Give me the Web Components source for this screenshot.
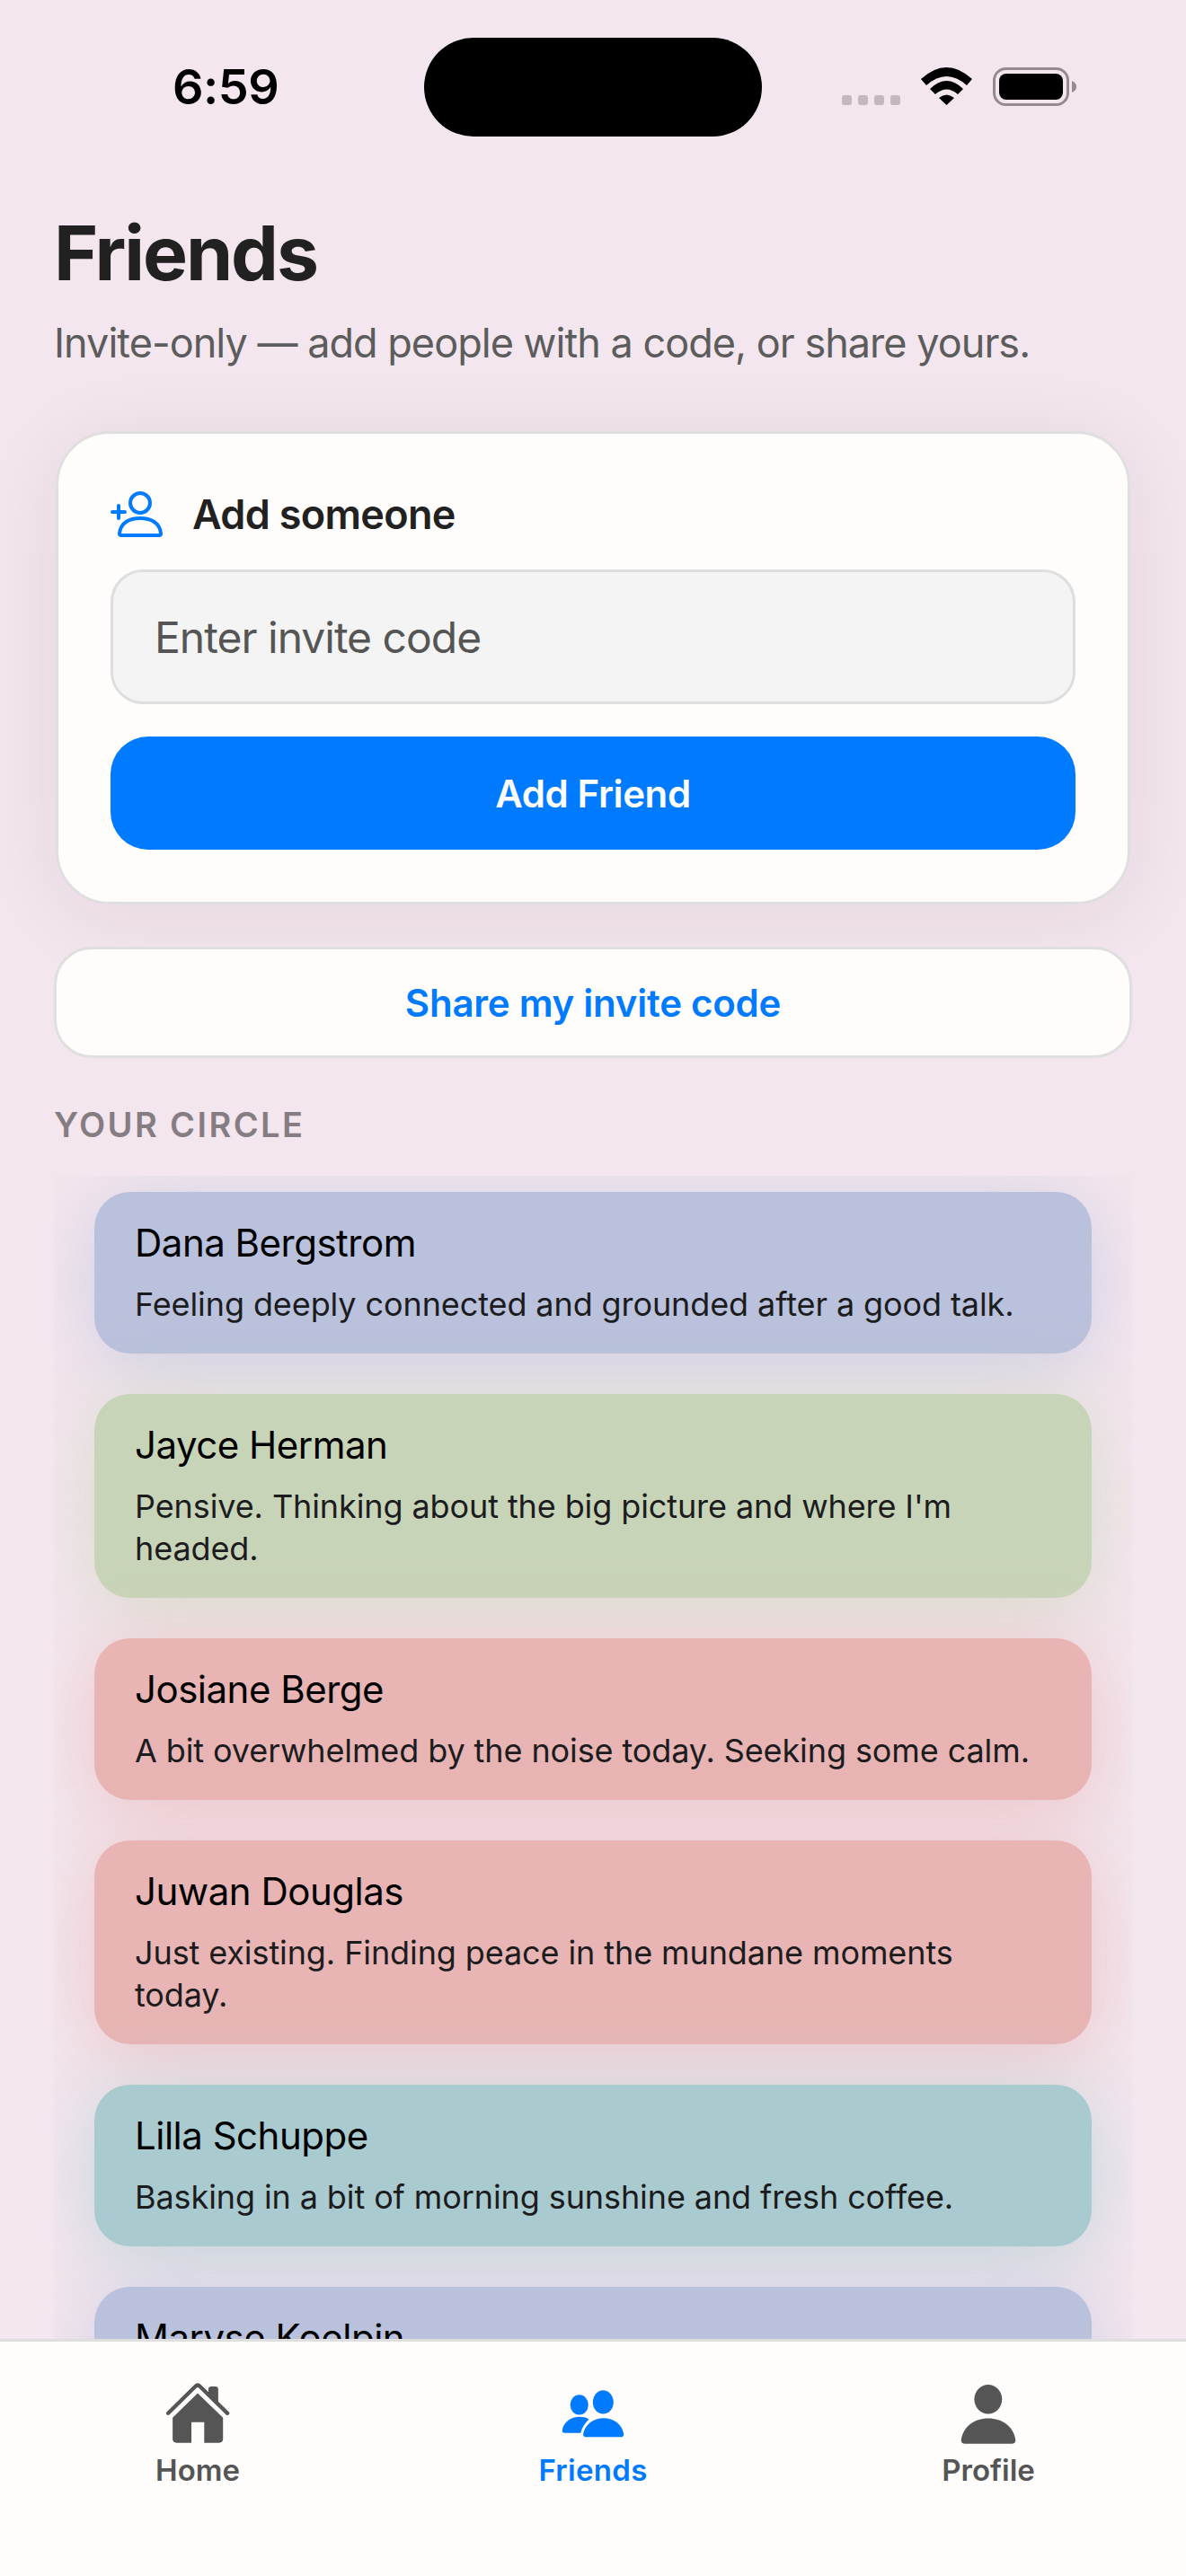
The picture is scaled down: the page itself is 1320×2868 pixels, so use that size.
<!DOCTYPE html>
<html>
<head>
<meta charset="utf-8">
<title>Friends</title>
<style>
  html, body { margin: 0; padding: 0; }
  body { width: 1320px; height: 2868px; overflow: hidden; background: #f3e6ee; font-family: Inter, "Noto Sans", sans-serif; }
</style>
</head>
<body>
<friends-app></friends-app>

<script>
class StatusBar extends HTMLElement {
  constructor() {
    super();
    this.attachShadow({ mode: 'open' });
    this.shadowRoot.innerHTML = `
      <style>
        :host { display: flex; height: 110px; padding-top: 42px; align-items: flex-start; color: #000; }
        .time { width: 472px; padding-left: 192px; box-sizing: border-box; font-size: 54px; font-weight: 600; line-height: 110px; height: 110px; letter-spacing: -.5px; }
        .island { width: 376px; height: 110px; border-radius: 55px; background: #000; }
        .right { position: relative; flex: 1; }
        svg { position: absolute; left: 0; top: -42px; }
      </style>
      <div class="time">6:59</div>
      <div class="island"></div>
      <div class="right">
        <svg width="472" height="152" viewBox="848 0 472 152">
          <g fill="#c4b8c0">
            <rect x="937" y="106" width="11" height="11" rx="3"/>
            <rect x="955" y="106" width="11" height="11" rx="3"/>
            <rect x="973" y="106" width="11" height="11" rx="3"/>
            <rect x="991" y="106" width="11" height="11" rx="3"/>
          </g>
          <path d="M1025 88 Q1053.500 62 1082 88 L1076 95 Q1053.500 75 1031 95Z M1035 99 Q1053.500 81 1072 99 L1066 105 Q1053.500 94 1041 105Z M1045 109 Q1053.500 102 1062 109 L1053.500 117Z" fill="#000"/>
          <rect x="1106.500" y="76.500" width="82" height="40" rx="13" fill="none" stroke="#958a90" stroke-width="3"/>
          <rect x="1112" y="82" width="71" height="29" rx="8" fill="#000"/>
          <path d="M1193 90 Q1198 92 1198 96.500 Q1198 101 1193 103Z" fill="#958a90"/>
        </svg>
      </div>`;
  }
}

class AddCard extends HTMLElement {
  constructor() {
    super();
    this.attachShadow({ mode: 'open' });
    this.shadowRoot.innerHTML = `
      <style>
        :host { display: block; box-sizing: border-box; background: #fffdfb; border: 3px solid #e0dfe0; border-radius: 60px; padding: 60px 58px; height: 527px; box-shadow: 0 12px 90px rgba(60, 30, 50, .08); margin: 0 2px; }
        .head { display: flex; align-items: center; gap: 31px; height: 56px; margin-top: 1px; color: #212121; font-size: 45px; font-weight: 600; letter-spacing: -.7px; }
        .input { box-sizing: border-box; height: 150px; margin-top: 34px; border: 3px solid #dedede; border-radius: 36px; background: #f4f4f5; padding-left: 46px; display: flex; align-items: center; font-size: 48px; letter-spacing: -1px; color: #555; }
        .btn { height: 126px; margin-top: 36px; border-radius: 42px; background: #007aff; color: #fff; display: flex; align-items: center; justify-content: center; font-size: 42px; font-weight: 600; letter-spacing: -.4px; }
      </style>
      <div class="head">
        <svg width="60" height="56" viewBox="0 0 60 56" fill="none" stroke="#007aff" stroke-width="4" stroke-linecap="round" stroke-linejoin="round">
          <circle cx="33" cy="16" r="11"/>
          <path d="M10 50 C11 38 21 33 33 33 C45 33 55 38 56 50 Q56 52 54 52 L12 52 Q10 52 10 50Z"/>
          <path d="M2 26 H16 M9 19 V33"/>
        </svg>
        <span>Add someone</span>
      </div>
      <div class="input">Enter invite code</div>
      <div class="btn">Add Friend</div>`;
  }
}

class FriendCard extends HTMLElement {
  constructor() {
    super();
    this.attachShadow({ mode: 'open' });
    this.shadowRoot.innerHTML = `
      <style>
        :host { display: block; flex: none; box-sizing: border-box; min-height: 180px; border-radius: 40px; padding: 32px 45px 31px; background: var(--tint); box-shadow: 0 12px 84px color-mix(in srgb, var(--tint) 65%, transparent); }
        .name { font-size: 42px; line-height: 50px; letter-spacing: -.5px; color: #000; }
        .mood { font-size: 36px; line-height: 47px; margin-top: 20px; letter-spacing: -.1px; color: #1c1c1e; }
      </style>
      <div class="name"><slot name="name"></slot></div>
      <div class="mood"><slot></slot></div>`;
  }
}

class TabItem extends HTMLElement {
  constructor() {
    super();
    this.attachShadow({ mode: 'open' });
    this.shadowRoot.innerHTML = `
      <style>
        :host { display: flex; flex-direction: column; align-items: center; flex: 1; color: #555; font-size: 33px; font-weight: 600; }
        :host([active]) { color: #007aff; letter-spacing: .3px; }
        .icon { height: 76px; display: flex; align-items: flex-end; }
        .label { margin-top: 4px; line-height: 44px; }
      </style>
      <div class="icon"><slot name="icon"></slot></div>
      <div class="label"><slot></slot></div>`;
  }
}

class TabBar extends HTMLElement {
  constructor() {
    super();
    this.attachShadow({ mode: 'open' });
    this.shadowRoot.innerHTML = `
      <style>
        :host { display: flex; flex: none; box-sizing: border-box; height: 264px; padding-top: 41px; background: #fffdfb; border-top: 3px solid #dedede; position: relative; z-index: 1; }
      </style>
      <tab-item>
        <svg slot="icon" style="display:block;fill:currentColor;margin-bottom:3px" width="75" height="68" viewBox="100 70 225 205">
          <path d="M247 92 Q247 82 257 82 H270 Q280 82 280 92 V140 L247 108Z"/>
          <path d="M112 172 L203 82 Q211 74 219 82 L311 172" fill="none" stroke="currentColor" stroke-width="13" stroke-linecap="round" stroke-linejoin="round"/>
          <path fill-rule="evenodd" d="M211 105 L296 187 V258 Q296 271 283 271 H233 V202 H190 V271 H140 Q127 271 127 258 V187Z"/>
        </svg>
        Home
      </tab-item>
      <tab-item active>
        <svg slot="icon" style="display:block;fill:currentColor;margin-bottom:10px" width="70" height="53" viewBox="120 94 195 158" preserveAspectRatio="none">
          <ellipse cx="175" cy="143" rx="28" ry="33"/>
          <ellipse cx="249" cy="134" rx="32" ry="39"/>
          <path d="M122 228 C126 200 150 183 175 183 C187 183 197 185 205 191 C193 203 184 218 179 236 H130 Q122 236 122 228Z"/>
          <path d="M187 240 C192 208 220 187 250 187 C282 187 308 208 313 240 Q313 250 303 250 H197 Q187 250 187 240Z"/>
        </svg>
        Friends
      </tab-item>
      <tab-item>
        <svg slot="icon" style="display:block;fill:currentColor;margin-bottom:3px" width="62" height="66" viewBox="1323 74 169 199" preserveAspectRatio="none">
          <ellipse cx="1407" cy="123" rx="42" ry="49"/>
          <path d="M1325 260 C1330 215 1365 187 1407 187 C1450 187 1485 215 1490 260 Q1490 272 1478 272 H1337 Q1325 272 1325 260Z"/>
        </svg>
        Profile
      </tab-item>`;
  }
}

class FriendsApp extends HTMLElement {
  constructor() {
    super();
    this.attachShadow({ mode: 'open' });
    this.shadowRoot.innerHTML = `
      <style>
        :host { display: flex; flex-direction: column; width: 1320px; height: 2868px; overflow: hidden; background: #f3e6ee; }
        main { flex: 1; min-height: 0; overflow: hidden; display: flex; flex-direction: column; padding: 0 60px; }
        h1 { margin: 80px 0 0; font-size: 84px; line-height: 100px; font-weight: 700; letter-spacing: -2.100px; color: #212121; flex: none; }
        .sub { flex: none; margin-top: 20px; font-size: 45px; line-height: 60px; letter-spacing: -.97px; color: #5c5c5c; white-space: nowrap; }
        add-card { margin-top: 68px; flex: none; }
        .share { flex: none; box-sizing: border-box; height: 124px; margin-top: 47px; border: 3px solid #dfdfdf; border-radius: 42px; background: #fffdfb; color: #007aff; font-size: 42px; font-weight: 600; letter-spacing: -.25px; display: flex; align-items: center; justify-content: center; }
        .section { flex: none; margin-top: 50px; font-size: 38px; line-height: 48px; font-weight: 600; letter-spacing: 2.400px; color: #857d82; }
        .list { flex: 1; min-height: 0; overflow: hidden; margin-top: 33px; padding: 18px 45px 0; display: flex; flex-direction: column; gap: 45px; }
      </style>
      <status-bar></status-bar>
      <main>
        <h1>Friends</h1>
        <div class="sub">Invite-only — add people with a code, or share yours.</div>
        <add-card></add-card>
        <div class="share">Share my invite code</div>
        <div class="section">YOUR CIRCLE</div>
        <div class="list">
          <friend-card style="--tint:#b9c1dc"><span slot="name">Dana Bergstrom</span>Feeling deeply connected and grounded after a good talk.</friend-card>
          <friend-card style="--tint:#c8d4b8"><span slot="name">Jayce Herman</span>Pensive. Thinking about the big picture and where I'm headed.</friend-card>
          <friend-card style="--tint:#e8b4b4"><span slot="name">Josiane Berge</span>A bit overwhelmed by the noise today. Seeking some calm.</friend-card>
          <friend-card style="--tint:#e8b4b4"><span slot="name">Juwan Douglas</span>Just existing. Finding peace in the mundane moments today.</friend-card>
          <friend-card style="--tint:#a9cbd0"><span slot="name">Lilla Schuppe</span>Basking in a bit of morning sunshine and fresh coffee.</friend-card>
          <friend-card style="--tint:#b9c1dc"><span slot="name">Maryse Koelpin</span></friend-card>
        </div>
      </main>
      <tab-bar></tab-bar>`;
  }
}

customElements.define('status-bar', StatusBar);
customElements.define('add-card', AddCard);
customElements.define('friend-card', FriendCard);
customElements.define('tab-item', TabItem);
customElements.define('tab-bar', TabBar);
customElements.define('friends-app', FriendsApp);
</script>
</body>
</html>
